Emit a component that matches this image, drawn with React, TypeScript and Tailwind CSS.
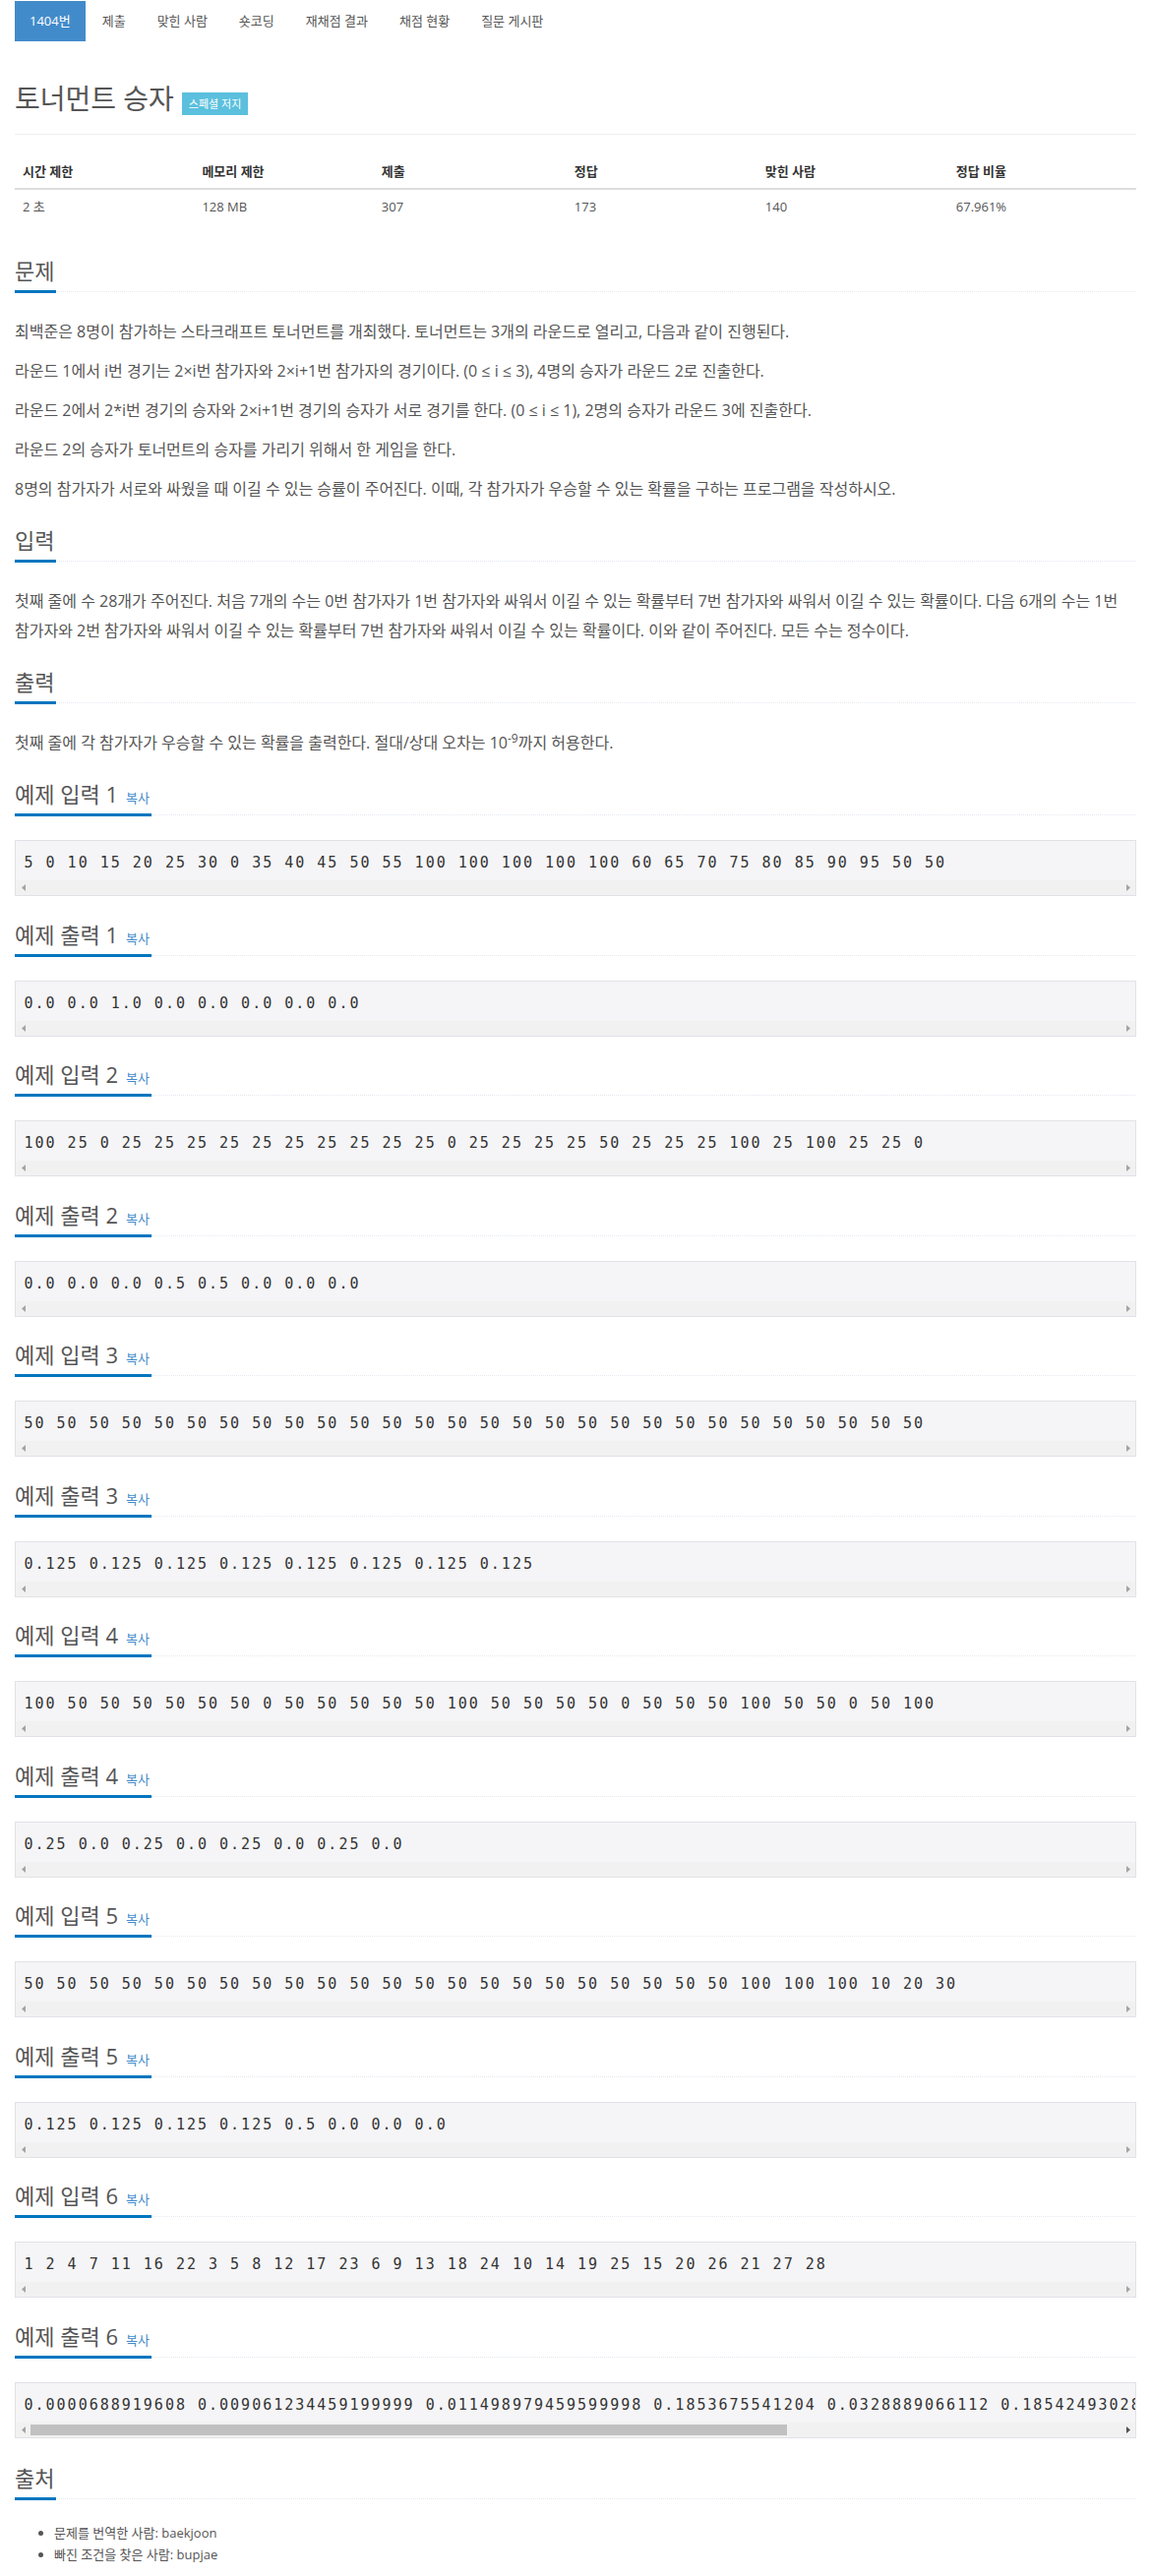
import React from "react";

const navItems = ["제출", "맞힌 사람", "숏코딩", "재채점 결과", "채점 현황", "질문 게시판"];

const infoHeads = ["시간 제한", "메모리 제한", "제출", "정답", "맞힌 사람", "정답 비율"];
const infoValues = ["2 초", "128 MB", "307", "173", "140", "67.961%"];

const samples: { title: string; text: string; thumb?: boolean }[] = [
  { title: "예제 입력 1", text: "5 0 10 15 20 25 30 0 35 40 45 50 55 100 100 100 100 100 60 65 70 75 80 85 90 95 50 50" },
  { title: "예제 출력 1", text: "0.0 0.0 1.0 0.0 0.0 0.0 0.0 0.0" },
  { title: "예제 입력 2", text: "100 25 0 25 25 25 25 25 25 25 25 25 25 0 25 25 25 25 50 25 25 25 100 25 100 25 25 0" },
  { title: "예제 출력 2", text: "0.0 0.0 0.0 0.5 0.5 0.0 0.0 0.0" },
  { title: "예제 입력 3", text: "50 50 50 50 50 50 50 50 50 50 50 50 50 50 50 50 50 50 50 50 50 50 50 50 50 50 50 50" },
  { title: "예제 출력 3", text: "0.125 0.125 0.125 0.125 0.125 0.125 0.125 0.125" },
  { title: "예제 입력 4", text: "100 50 50 50 50 50 50 0 50 50 50 50 50 100 50 50 50 50 0 50 50 50 100 50 50 0 50 100" },
  { title: "예제 출력 4", text: "0.25 0.0 0.25 0.0 0.25 0.0 0.25 0.0" },
  { title: "예제 입력 5", text: "50 50 50 50 50 50 50 50 50 50 50 50 50 50 50 50 50 50 50 50 50 50 100 100 100 10 20 30" },
  { title: "예제 출력 5", text: "0.125 0.125 0.125 0.125 0.5 0.0 0.0 0.0" },
  { title: "예제 입력 6", text: "1 2 4 7 11 16 22 3 5 8 12 17 23 6 9 13 18 24 10 14 19 25 15 20 26 21 27 28" },
  {
    title: "예제 출력 6",
    text: "0.0000688919608 0.009061234459199999 0.011498979459599998 0.1853675541204 0.0328889066112 0.18542493028864 0.0722413426224 0.48848849232",
    thumb: true,
  },
];

function Headline({ title, copy }: { title: string; copy?: boolean }) {
  return (
    <div className="mb-[25px] border-b border-dotted border-[#e4e9f0]">
      <h2 className="-mb-[2px] inline-block border-b-[3px] border-[#0076c0] pb-[5px] pr-[2px] text-[22px] font-normal leading-[30px] text-[#555]">
        {title}
        {copy && <span className="ml-[8px] text-[13px] leading-none text-[#428bca]">복사</span>}
      </h2>
    </div>
  );
}

function Arrow({ dir, dark }: { dir: "left" | "right"; dark?: boolean }) {
  return (
    <svg width="4" height="7" viewBox="0 0 4 7">
      <polygon
        points={dir === "left" ? "4,0 4,7 0,3.5" : "0,0 0,7 4,3.5"}
        fill={dark ? "#505050" : "#a3a3a3"}
      />
    </svg>
  );
}

function Sample({ text, thumb }: { text: string; thumb?: boolean }) {
  return (
    <div className="border border-[#e1e1e8] bg-[#f5f5f7]">
      <div className="h-[40px] overflow-hidden whitespace-pre pl-[8.5px] pt-[4px] font-['DejaVu_Sans_Mono',monospace] text-[15px] leading-[36px] tracking-[2px] text-[#333]">
        {text}
      </div>
      <div className="flex h-[15px] bg-[#f1f1f1]">
        <div className="flex w-[15px] items-center justify-center">
          <Arrow dir="left" />
        </div>
        <div className="flex-1 py-[2px]">
          {thumb && <div className="h-full w-[769px] bg-[#c1c1c1]" />}
        </div>
        <div className="flex w-[15px] items-center justify-center">
          <Arrow dir="right" dark={thumb} />
        </div>
      </div>
    </div>
  );
}

export default function App() {
  return (
    <div className="flex min-h-[2619px] w-[1170px] flex-col bg-white px-[15px] font-['Open_Sans','Noto_Sans_CJK_KR',sans-serif] text-[#555]">
      {/* problem menu */}
      <ul className="flex pt-px text-[13px] leading-[21px]">
        <li>
          <span className="block bg-[#428bca] px-[15px] py-[10px] text-white">1404번</span>
        </li>
        {navItems.map((item) => (
          <li key={item} className="ml-[2px]">
            <span className="block px-[15px] py-[10px] text-[#555]">{item}</span>
          </li>
        ))}
      </ul>

      {/* title */}
      <div className="mt-[38px] border-b border-[#eee] pb-[16px]">
        <h1 className="flex items-start gap-[8px] text-[28px] font-normal leading-[40px] text-[#555]">
          <span>토너먼트 승자</span>
          <span className="mt-[14px] flex h-[23px] items-center bg-[#5bc0de] px-[7px] text-[11px] leading-none text-white">
            스페셜 저지
          </span>
        </h1>
      </div>

      {/* info table */}
      <div className="mt-[20px] text-[13px] leading-[18px]">
        <div className="grid grid-cols-[182.4px_182.4px_196px_194px_194px_1fr] border-b-2 border-[#ddd] font-bold text-[#333]">
          {infoHeads.map((h) => (
            <div key={h} className="px-[8px] py-[8px]">{h}</div>
          ))}
        </div>
        <div className="grid grid-cols-[182.4px_182.4px_196px_194px_194px_1fr]">
          {infoValues.map((v) => (
            <div key={v} className="px-[8px] py-[8px]">{v}</div>
          ))}
        </div>
      </div>

      {/* description */}
      <section className="mt-[33px]">
        <Headline title="문제" />
        <div className="text-[16px] leading-[30px]">
          <p className="mb-[10px]">최백준은 8명이 참가하는 스타크래프트 토너먼트를 개최했다. 토너먼트는 3개의 라운드로 열리고, 다음과 같이 진행된다.</p>
          <p className="mb-[10px]">라운드 1에서 i번 경기는 2×i번 참가자와 2×i+1번 참가자의 경기이다. (0 ≤ i ≤ 3), 4명의 승자가 라운드 2로 진출한다.</p>
          <p className="mb-[10px]">라운드 2에서 2*i번 경기의 승자와 2×i+1번 경기의 승자가 서로 경기를 한다. (0 ≤ i ≤ 1), 2명의 승자가 라운드 3에 진출한다.</p>
          <p className="mb-[10px]">라운드 2의 승자가 토너먼트의 승자를 가리기 위해서 한 게임을 한다.</p>
          <p className="mb-[10px]">8명의 참가자가 서로와 싸웠을 때 이길 수 있는 승률이 주어진다. 이때, 각 참가자가 우승할 수 있는 확률을 구하는 프로그램을 작성하시오.</p>
        </div>
      </section>

      <section className="mt-[12px]">
        <Headline title="입력" />
        <div className="text-[16px] leading-[30px]">
          <p className="mb-[10px]">첫째 줄에 수 28개가 주어진다. 처음 7개의 수는 0번 참가자가 1번 참가자와 싸워서 이길 수 있는 확률부터 7번 참가자와 싸워서 이길 수 있는 확률이다. 다음 6개의 수는 1번 참가자와 2번 참가자와 싸워서 이길 수 있는 확률부터 7번 참가자와 싸워서 이길 수 있는 확률이다. 이와 같이 주어진다. 모든 수는 정수이다.</p>
        </div>
      </section>

      <section className="mt-[12px]">
        <Headline title="출력" />
        <div className="text-[16px] leading-[30px]">
          <p className="mb-[10px]">첫째 줄에 각 참가자가 우승할 수 있는 확률을 출력한다. 절대/상대 오차는 10<sup>-9</sup>까지 허용한다.</p>
        </div>
      </section>

      {samples.map((s) => (
        <section key={s.title} className="mt-[12px]">
          <Headline title={s.title} copy />
          <div className="mb-[11.5px]">
            <Sample text={s.text} thumb={s.thumb} />
          </div>
        </section>
      ))}

      {/* source */}
      <section className="mt-[14px]">
        <Headline title="출처" />
        <ul className="-mt-[2px] list-disc pl-[40px] text-[13px] leading-[22px] text-[#555]">
          <li>문제를 번역한 사람: baekjoon</li>
          <li>빠진 조건을 찾은 사람: bupjae</li>
        </ul>
      </section>
    </div>
  );
}
